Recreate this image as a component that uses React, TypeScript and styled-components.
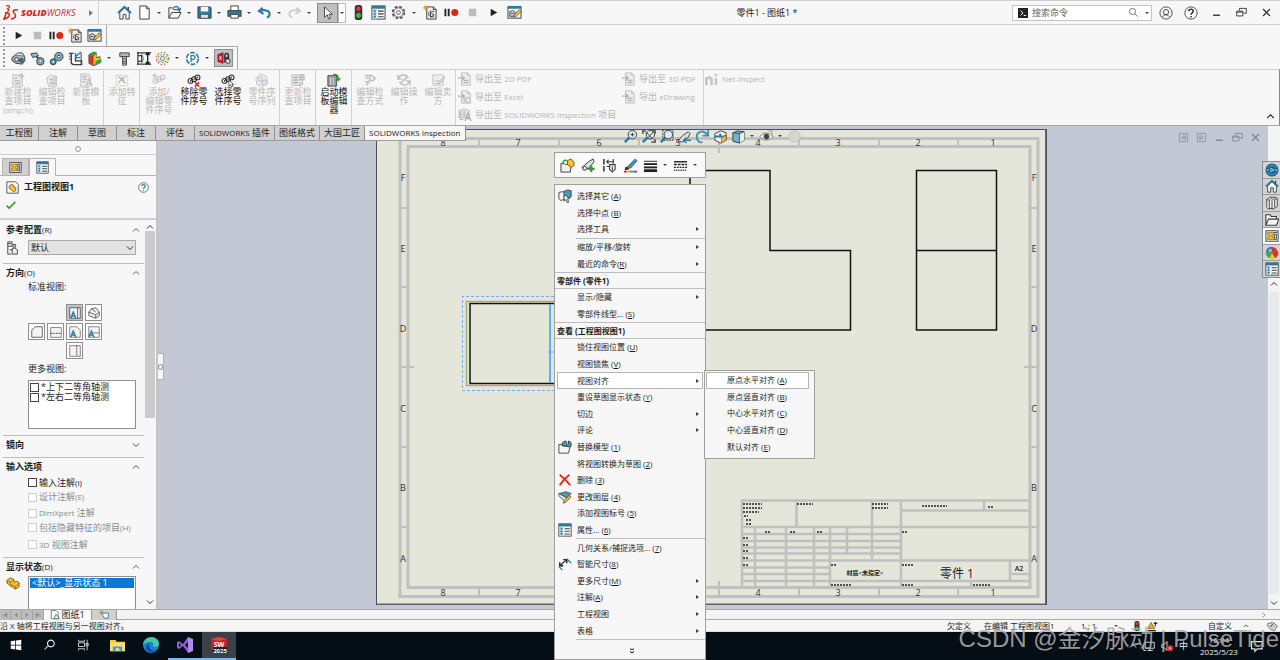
import React from 'react';
import styled, { createGlobalStyle, css } from 'styled-components';

const ink = '#3c3c3c';
const blue = '#2c7ba0';
const face = '#f7f7f7';
const line = '#bdbdbd';

const Global = createGlobalStyle`
  * { box-sizing: border-box; }
  html, body { margin: 0; padding: 0; }
  body {
    font-family: "Open Sans", "Noto Sans CJK SC", sans-serif;
    font-size: 9px;
    line-height: 10px;
    color: #1c1c1c;
    background: ${face};
    overflow: hidden;
  }
  button, input, select { font: inherit; color: inherit; margin: 0; }
  button { border: 0; background: none; padding: 0; }
  ul { list-style: none; margin: 0; padding: 0; }
  h1, h2 { margin: 0; font-size: 9px; line-height: 10px; font-weight: 600; }
`;

/* ---------- icons ---------- */

const list = (
  <>
    <rect x="1" y="1" width="14" height="14" fill="#fff" stroke={ink} />
    <rect x="1" y="1" width="14" height="3" fill={blue} />
    <rect x="2" y="4" width="4" height="11" fill="#b9d8e6" />
    <path d="M3 6.500h2M3 9.500h2M3 12.500h2" stroke={blue} strokeWidth="2" />
    <path d="M7.500 6.500h6M7.500 9.500h6M7.500 12.500h6" stroke={ink} strokeWidth="1.200" />
  </>
);
const macro = (
  <>
    <path d="M4 2h7l3 3v10H4z" fill="#eee" stroke={ink} />
    <path d="M11 2v3h3" fill="none" stroke={ink} />
    <path d="M12 7.500c-4-2-6 0-6 2s2 4 6 3M8 8l4 2.500-4 2.500z" fill="#fff" stroke={ink} />
    <path d="M3 0v6M0 3h6M1 1l4 4M5 1L1 5" stroke="#e0892a" />
  </>
);
const edit = (
  <>
    <rect x="1" y="2" width="14" height="12" fill="#f4f4f4" stroke={ink} />
    <rect x="1" y="1" width="14" height="3" fill={blue} />
    <path d="M3 12V7l3-1 3 2-2 4zM4 9h3" fill="#ddd" stroke={ink} />
    <path d="M7 13l1-3 5-5 2 2-5 5z" fill="#f2c230" stroke={ink} strokeWidth=".7" />
  </>
);
const drawingTree = (
  <>
    <rect x="1" y="2" width="14" height="12" fill="#e4e4e4" stroke={ink} />
    <path d="M3 4h7v3H8v2h2v3H3V9h2V7H3z" fill="#f0b92a" stroke="#6b5310" strokeWidth=".6" />
    <path d="M11 6h2v6h-2zM10 4h4" stroke={ink} fill="#fff" />
  </>
);
const part = (
  <>
    <path d="M1 5l4-3 4 2v3l4-1 2 2v4l-4 3-5-3-5-4z" fill="#f2c03a" stroke="#7b5a0c" />
    <path d="M1 5l4 2 4-3M5 7v3l6 2 4-4M11 12v3" fill="none" stroke="#7b5a0c" strokeWidth=".8" />
  </>
);
const doc = <path d="M3 1h7l3 3v11H3zM10 1v3h3" fill="#fdfdfd" stroke={ink} />;
const light = (
  <>
    <rect x="4" y="0" width="8" height="16" rx="3" fill="#333" />
    <circle cx="8" cy="4" r="2.500" fill="#e03a2a" />
    <circle cx="8" cy="11" r="2.800" fill="#3fb04a" />
  </>
);
const exportDoc = (
  <>
    <path d="M4 1h7l3 3v11H4V9M4 5V1M11 1v3h3" fill="#ececec" stroke="#bdbdbd" />
    <path d="M0 7h6M4 4l3 3-3 3" fill="none" stroke="#b0b0b0" strokeWidth="1.600" />
    <path d="M6 12h6M7 9.500h5" stroke="#b6b6b6" strokeWidth="1.500" />
  </>
);
const balloons = (c: string) => (
  <>
    <circle cx="4" cy="9" r="2.800" fill="none" stroke={c} strokeWidth="1.200" />
    <circle cx="8" cy="7" r="2.800" fill="none" stroke={c} strokeWidth="1.200" />
    <circle cx="12" cy="5" r="2.800" fill="none" stroke={c} strokeWidth="1.200" />
    <path d="M4 8v2M8 6v2M12 4v2" stroke={c} />
  </>
);
const lens = (
  <>
    <circle cx="10" cy="6" r="4.500" fill="#dce9ee" stroke={ink} />
    <path d="M7 9l-5 5" stroke={blue} strokeWidth="2.600" />
  </>
);

const icons: Record<string, React.ReactNode> = {
  home: (
    <>
      <path d="M3 8v7h3.500v-5h3v5H13V8L8 3z" fill="#fafafa" stroke={ink} />
      <path d="M1 8.500L8 2l7 6.500" fill="none" stroke={blue} strokeWidth="2" />
      <path d="M12 2v3" stroke={ink} strokeWidth="1.500" />
    </>
  ),
  doc,
  open: (
    <>
      <path d="M2 14V3h4l1 2h6v3M2 14l3-6h10l-3 6z" fill="#f5f5f5" stroke={ink} />
      <path d="M7 3c3-3 5-1 6 2M10.500 4.500L13.500 6l1-3" fill="none" stroke={blue} strokeWidth="1.500" />
    </>
  ),
  save: (
    <>
      <path d="M1 2h13l1 1v11H1z" fill={blue} stroke={ink} />
      <rect x="4" y="2" width="8" height="5" fill="#f5f5f5" />
      <rect x="4" y="10" width="8" height="4" fill="#ddd" stroke={ink} strokeWidth=".6" />
    </>
  ),
  print: (
    <>
      <path d="M4 6V1h8v5" fill="#fff" stroke={ink} />
      <rect x="1" y="6" width="14" height="6" fill={blue} stroke={ink} />
      <path d="M4 10h8v4H4z" fill="#fff" stroke={ink} />
    </>
  ),
  undo: <path d="M6 3L2 6.500l5 3M2.500 6.500c5-2 11-1 11 3 0 2-1 3-3 4" fill="none" stroke={blue} strokeWidth="2.200" />,
  redo: <path d="M10 3l4 3.500-5 3M13.500 6.500c-5-2-11-1-11 3 0 2 1 3 3 4" fill="none" stroke="#cfcfcf" strokeWidth="2" />,
  cursor: <path d="M4 1v12l3-3 2 5 2-1-2-4.500h4z" fill="#fff" stroke={ink} />,
  light,
  list,
  gear: (
    <>
      <circle cx="8" cy="8" r="6.300" fill="none" stroke="#555" strokeWidth="1.800" strokeDasharray="3 1.950" />
      <circle cx="8" cy="8" r="5" fill="#f6f6f6" stroke="#555" />
      <circle cx="8" cy="8" r="2" fill="none" stroke="#555" />
    </>
  ),
  macro,
  rec: (
    <>
      <path d="M1.500 4v8M5 4v8" stroke="#222" strokeWidth="2" />
      <circle cx="11.500" cy="8" r="3.800" fill="#e02510" />
    </>
  ),
  stop: <rect x="4" y="4" width="8" height="8" fill="#bcbcbc" />,
  play: <path d="M5 4l7 4-7 4z" fill="#222" />,
  edit,
  machine: (
    <>
      <path d="M1 7l4-3 9 1 1 5-3 4-7-1-4-3z" fill="#9fb2ba" stroke={ink} />
      <circle cx="6" cy="9" r="2" fill="#e8eef0" stroke={ink} />
      <circle cx="11" cy="10" r="2" fill={blue} stroke={ink} />
      <path d="M5 4l2-2h5l2 3" fill="#dfe6e9" stroke={ink} />
    </>
  ),
  links: (
    <>
      <path d="M1 3l6-1 2 3-6 2z" fill="#8fc0d6" stroke={ink} />
      <path d="M7 6l4 3" stroke={ink} strokeWidth="2" />
      <circle cx="11" cy="11" r="4" fill="#7ab3cc" stroke={ink} />
      <circle cx="11" cy="11" r="1.500" fill="#fff" stroke={ink} strokeWidth=".6" />
    </>
  ),
  gears: (
    <>
      <circle cx="10.500" cy="6" r="4.500" fill="#7ab3cc" stroke={ink} />
      <circle cx="10.500" cy="6" r="1.600" fill="#fff" stroke={ink} />
      <circle cx="4.500" cy="11.500" r="3.200" fill="#4f93b2" stroke={ink} />
      <circle cx="4.500" cy="11.500" r="1" fill="#fff" />
    </>
  ),
  pipe: (
    <>
      <path d="M1 2.500h5M3.500 3v9c0 2 1 2.500 3 2.500h8v-4H8V7" fill="none" stroke={ink} strokeWidth="1.400" />
      <path d="M1 5.500h2M1 8.500h2M14 2v12" stroke={ink} />
      <path d="M14 1L8 6M8 2v5h5" fill="none" stroke={blue} strokeWidth="1.400" />
    </>
  ),
  cube: (
    <>
      <path d="M2 4l5-3 3 1v5l4-1 1 6-8 4-5-3z" fill="#2fa84a" stroke={ink} strokeWidth=".7" />
      <path d="M2 4l5 2v10l-5-3z" fill="#d8322a" />
      <path d="M7 6l3-3v5l5-1v4l-8 4z" fill="#f0c52c" />
      <path d="M9 11l6-3v4l-6 3z" fill="#2fa84a" />
    </>
  ),
  screw: (
    <>
      <path d="M3 2h10v4H3z" fill="#b9b9b9" stroke={ink} />
      <path d="M6 6h4v9H6z" fill="#ddd" stroke={ink} />
      <path d="M6 8.500h4M6 11h4M6 13h4" stroke={ink} />
    </>
  ),
  dim: (
    <>
      <path d="M2 1v14M1 2h8M1 14h8M2 5h4v6H2" fill="none" stroke={ink} strokeWidth="1.300" />
      <path d="M6 3l2 5-2 5" fill="none" stroke={blue} />
      <path d="M12.500 2v12M10.500 4.500L12.500 2l2 2.500M10.500 11.500l2 2.500 2-2.500M9 2h7M9 14h7" fill="none" stroke="#111" strokeWidth="1.300" />
    </>
  ),
  dots: (
    <>
      <circle cx="8" cy="8" r="6.500" fill="none" stroke="#e05a4a" strokeWidth="1.500" strokeDasharray="1.500 2" />
      <ellipse cx="8" cy="8" rx="4.800" ry="4" fill="none" stroke="#5fb843" strokeWidth="1.500" strokeDasharray="1.500 1.500" />
      <path d="M1 5h3M1 11h3M12 5h3M12 11h3" stroke="#e6c52e" />
      <circle cx="8" cy="8" r="2.200" fill="#eee" stroke="#777" />
    </>
  ),
  ring: (
    <>
      <circle cx="8" cy="8" r="6.300" fill="none" stroke={blue} strokeWidth="1.800" strokeDasharray="5 1.600" />
      <path d="M6.500 12V5h2.300a1.800 1.800 0 010 4H6.500" fill="none" stroke={blue} strokeWidth="1.300" />
    </>
  ),
  inspect: (
    <>
      <path d="M1 4l6-2v12l-6-2z" fill="#c8202a" stroke="#6b1015" strokeWidth=".7" />
      <path d="M3 6l2 4M5 6l-2 4" stroke="#fff" />
      <path d="M9 13V5c0-3 4-3 4 0v8M9 8h4" fill="none" stroke="#222" strokeWidth="1.500" />
      <circle cx="12.500" cy="11.500" r="2.500" fill="#eee" stroke="#222" />
    </>
  ),
  formNew: (
    <>
      <path d="M2 2h11v13H2z" fill="#ededed" stroke="#bdbdbd" />
      <path d="M4 6h3M4 9h7M4 12h7" stroke="#b5b5b5" strokeWidth="1.600" />
      <path d="M12 0v7M8.500 3.500h7" stroke="#c2c2c2" strokeWidth="1.500" />
    </>
  ),
  formEdit: (
    <>
      <path d="M2 5l5-3 6 3v10H4z" fill="#ededed" stroke="#bdbdbd" />
      <path d="M6 13l1-4 5-6 2 2-5 7z" fill="#ddd" stroke="#b5b5b5" />
      <path d="M5 7h3M9 12h4" stroke="#b5b5b5" strokeWidth="1.500" />
    </>
  ),
  formSheet: (
    <>
      <path d="M2 1h9l2 3v11H2z" fill="#ededed" stroke="#bdbdbd" />
      <path d="M4 4h5M4 7h5M4 10h3" stroke="#b5b5b5" strokeWidth="1.500" />
      <path d="M8 15l3-8 4 8M9 12h5" fill="none" stroke="#bdbdbd" strokeWidth="1.400" />
    </>
  ),
  feature: (
    <>
      <rect x="1.500" y="2.500" width="13" height="12" fill="none" stroke="#b9b9b9" strokeDasharray="2 1.500" />
      <path d="M4 12l4-7 4 7M4 4l8 8M12 4l-3 3" fill="none" stroke="#b9b9b9" strokeWidth="1.400" />
    </>
  ),
  balloonAdd: (
    <>
      {balloons('#c4c4c4')}
      <path d="M3 0v6M0 3h6" stroke="#c4c4c4" strokeWidth="1.400" />
    </>
  ),
  balloonDel: (
    <>
      {balloons('#2a2a2a')}
      <path d="M9 10.500l5 5M14 10.500l-5 5" stroke="#e02510" strokeWidth="1.800" />
    </>
  ),
  balloonPick: (
    <>
      {balloons('#2a2a2a')}
      <path d="M9 8v7l2-1.500 1 2.500 1.500-.6-1-2.400h2z" fill="#fff" stroke="#2a2a2a" strokeWidth=".8" />
    </>
  ),
  sequence: (
    <>
      <path d="M1 6l5-5 7 3 1 7-5 4-7-2z" fill="#ececec" stroke="#c0c0c0" />
      <circle cx="6" cy="7" r="2.500" fill="none" stroke="#b5b5b5" />
      <circle cx="11" cy="11" r="3" fill="#e4e4e4" stroke="#b5b5b5" />
    </>
  ),
  update: (
    <>
      <path d="M1 2h9v12H1z" fill="#e6e6e6" stroke="#bdbdbd" />
      <path d="M3 5h5M3 8h5M3 11h5" stroke="#aaa" strokeWidth="1.500" />
      <path d="M11 2h4v6h-4zM13 9v4l-4 2" fill="#ccc" stroke="#b0b0b0" />
    </>
  ),
  template: (
    <>
      <path d="M1 3h10v12H1z" fill="#9a9a9a" stroke="#444" />
      <path d="M4 5v9M7 5v9" stroke="#ddd" strokeWidth="1.200" />
      <path d="M7 2c4-1 6 1 6 5" fill="none" stroke="#2f9a3a" strokeWidth="1.800" />
      <path d="M10 6h6l-3 4z" fill="#2f9a3a" />
    </>
  ),
  method: <path d="M2 3h8l4 3-3 3-3-1-4 6M3 6h6M2 10h4" fill="none" stroke="#c0c0c0" strokeWidth="1.800" />,
  operation: <path d="M13 6c-2-5-9-5-11 0M1 2v5h5M3 10c2 5 9 5 11 0M15 14V9h-5M5 11l6-6" fill="none" stroke="#c0c0c0" strokeWidth="1.700" />,
  vendor: (
    <>
      <path d="M2 2h12v12H2zM4 9h6M4 12h6" fill="#ededed" stroke="#c2c2c2" />
      <path d="M8 13l1-3 6-6 1 2-6 6z" fill="#ddd" stroke="#b9b9b9" />
    </>
  ),
  exportDoc,
  exportExcel: (
    <>
      {exportDoc}
      <path d="M8 8h7v7H8z" fill="#c9c9c9" />
      <path d="M9.500 9.500l4 4M13.500 9.500l-4 4" stroke="#fff" />
    </>
  ),
  exportProject: (
    <>
      <path d="M1 3l6-2 6 2v8H1z" fill="#e6e6e6" stroke="#b9b9b9" />
      <path d="M3 4v6M7 3v7M8 15l3-9 4 9M9 12h5M2 13h4" fill="none" stroke="#b3b3b3" strokeWidth="1.500" />
    </>
  ),
  ni: <path d="M1.500 15V6M1.500 9c1-3.500 6-3.500 6 0v6M12.500 15V7M12.500 2v3" fill="none" stroke="#c6c6c6" strokeWidth="3" />,
  zoomFit: (
    <>
      {lens}
      <path d="M8 6h4M10 4v4" stroke={ink} />
    </>
  ),
  zoomArea: (
    <>
      <path d="M2 5V2h3M11 2h4v3M15 11v3h-4" fill="none" stroke={ink} strokeWidth="1.500" />
      {lens}
      <path d="M5 3l8 8M13 3l-6 7" stroke={ink} />
    </>
  ),
  zoomPrev: (
    <>
      <rect x="4" y="1" width="11" height="11" fill="none" stroke={ink} strokeDasharray="2 1" />
      {lens}
    </>
  ),
  section: (
    <>
      <path d="M1 13l5-6 6-4 2 2-3 5-5 4z" fill="#dce3e6" stroke={ink} />
      <path d="M15 12H8M10 9l-3 3 3 3" fill="none" stroke={blue} strokeWidth="1.500" />
    </>
  ),
  rotate: <path d="M14 1v6H8M13 6C9 0 1 3 2 9c0 4 3 6 6 5" fill="none" stroke="#4292b4" strokeWidth="2" />,
  view3d: (
    <>
      <path d="M2 5l6-3 6 2v8l-6 3-6-3z" fill="#f2f2f2" stroke={ink} />
      <path d="M2 8h7l-2-3M14 7c-3 0-5 2-4 5" fill="none" stroke={blue} strokeWidth="2" />
      <path d="M9 9l5-2v5l-5 3z" fill="#eab54a" stroke="#7a5a1a" strokeWidth=".6" />
    </>
  ),
  shaded: (
    <>
      <path d="M2 4l5-2 7 1v9l-5 3-7-2z" fill="#6fb3d0" stroke={ink} />
      <path d="M9 5l5-2v9l-5 3z" fill="#e9eff1" />
      <path d="M2 4l7 1v10M9 5l5-2" fill="none" stroke={ink} strokeWidth=".8" />
    </>
  ),
  eye: (
    <>
      <path d="M1 8c4-5 10-5 14 0-4 5-10 5-14 0z" fill="#eee" stroke="#777" />
      <circle cx="8" cy="8" r="3" fill="#444" />
      <path d="M10 2h4v4" fill="none" stroke="#999" />
    </>
  ),
  ball: <circle cx="8" cy="8" r="6" fill="#d6d8d0" stroke="#c0c2ba" />,
  pageLeft: <path d="M2 2h12v12H2zM5 8l4-3v6zM11 5v6" fill="none" stroke="#8d919b" strokeWidth="1.300" />,
  pageRight: <path d="M2 2h12v12H2zM11 8L7 5v6zM5 5v6" fill="none" stroke="#8d919b" strokeWidth="1.300" />,
  min: <path d="M3 12h10" stroke="currentColor" strokeWidth="2" />,
  restore: <path d="M5 5V2h10v7h-4M1 6h9v7H1zM1 7.500h9" fill="none" stroke="currentColor" strokeWidth="1.300" />,
  close: <path d="M3 3l10 10M13 3L3 13" stroke="currentColor" strokeWidth="1.800" />,
  user: (
    <>
      <circle cx="8" cy="8" r="7" fill="none" stroke={ink} />
      <circle cx="8" cy="7" r="3" fill="none" stroke={ink} />
      <path d="M4 13c1-4 7-4 8 0" fill="none" stroke={ink} />
    </>
  ),
  help: (
    <>
      <circle cx="8" cy="8" r="7" fill="#fff" stroke={ink} />
      <path d="M5.500 6c0-3 5-3 5 0 0 2-2.500 1.800-2.500 4M8 11.500v1.500" fill="none" stroke="currentColor" strokeWidth="1.800" />
    </>
  ),
  prompt: (
    <>
      <rect x="0" y="0" width="16" height="16" fill="#222" />
      <path d="M4 4l4 4-4 4M9 12h4" fill="none" stroke="#fff" strokeWidth="1.500" />
    </>
  ),
  search: <path d="M14 14l-4-4M11 6.500a4.500 4.500 0 11-9 0 4.500 4.500 0 019 0z" fill="none" stroke="currentColor" strokeWidth="1.300" />,
  chevUp: <path d="M2 11l6-6 6 6" fill="none" stroke="currentColor" strokeWidth="1.800" />,
  chevDown: <path d="M2 5l6 6 6-6" fill="none" stroke="currentColor" strokeWidth="1.800" />,
  chevRight: <path d="M5 3l5 5-5 5" fill="none" stroke="currentColor" strokeWidth="2" />,
  sphere: (
    <>
      <circle cx="8" cy="8" r="7.500" fill="#1f668e" />
      <path d="M3 5c3-3 7-3 10 0M3 11c3 3 7 3 10 0" fill="none" stroke="#4b9cc0" strokeWidth="1.200" />
      <path d="M6.500 6l4 2-4 2z" fill="none" stroke="#9fd0e6" />
      <path d="M2 8h2M12 8h2" stroke="#7cc0de" strokeWidth="2" />
    </>
  ),
  library: <path d="M2 4l4-3 2 1 3-1 3 2v9l-5 3-2-1-3 1-2-2zM2 4l3 1v10M5 5l3-3M8 5v10M8 5l3-3M11 4v9M11 4l3-1" fill="#eee" stroke={ink} />,
  folder: <path d="M1 14V2h5l1 2h6v3M1 14L4 7h12l-3 7z" fill="#f4f4f4" stroke={ink} strokeWidth="1.200" />,
  drawingTree,
  colors: (
    <>
      <circle cx="8" cy="8" r="7" fill="#f0c22c" />
      <path d="M8 8V1a7 7 0 016 4z" fill="#d9302a" />
      <path d="M8 8l6-3a7 7 0 01-2 9z" fill="#c53a2c" />
      <path d="M8 8V1a7 7 0 00-7 6z" fill="#2f78c4" />
      <path d="M8 8L1 7a7 7 0 004 7z" fill="#3fa648" />
      <circle cx="6" cy="5" r="2" fill="#fff" opacity=".5" />
    </>
  ),
  partDoc: (
    <>
      <path d="M1 1h11l3 3v11H1z" fill="#fafafa" stroke={ink} />
      <path d="M4 6l3-2 2 1v2l3 1v4l-3 1-5-4z" fill="#f2c03a" stroke="#7b5a0c" />
    </>
  ),
  part,
  check: <path d="M1 9l4 4L15 3" fill="none" stroke="#2aa01c" strokeWidth="2.400" />,
  config: <path d="M2 1h5v5H2zM2 6v9h4M4 10h4M8 4h3v3H8zM7 9l3-1 3 2v5H7zM2 3h4" fill="#eee" stroke={ink} />,
  vFront: (
    <>
      <path d="M2 2h9v12H2zM11 2h3v12h-3" fill="#f5f5f5" stroke="#555" />
      <path d="M3 14l3-7 3 7M4 11.500h4" fill="none" stroke={blue} strokeWidth="1.600" />
    </>
  ),
  vIso: <path d="M2 7l3-4 5-1 4 5v4l-4 3-8-3zM2 7l8 3 4-3M10 10v4M5 3l5 4" fill="#eee" stroke="#555" />,
  vLeft: <path d="M2 6l4-4h8v12H2z" fill="#f5f5f5" stroke="#555" />,
  vTop: (
    <>
      <rect x="2" y="3" width="12" height="11" fill="#f5f5f5" stroke="#777" />
      <path d="M2 9.500h12" stroke="#333" strokeDasharray="2 1" />
    </>
  ),
  vRight: (
    <>
      <path d="M2 2h8l4 4v8H2z" fill="#f5f5f5" stroke="#777" />
      <path d="M3 14l3-7 3 7M4 11.500h4" fill="none" stroke={blue} strokeWidth="1.600" />
    </>
  ),
  vBack: (
    <>
      <path d="M2 2h12v12H2zM7 9h7" fill="#f5f5f5" stroke="#777" />
      <path d="M2 14l3-7 3 7M3 11.500h4" fill="none" stroke={blue} strokeWidth="1.600" />
    </>
  ),
  vBottom: (
    <>
      <rect x="2" y="2" width="12" height="12" fill="#f5f5f5" stroke="#777" />
      <path d="M10 2v12" stroke="#333" strokeDasharray="2 1" />
    </>
  ),
  sheet: (
    <>
      <path d="M2 1h8l3 3v10H2z" fill="#fff" stroke={ink} />
      <path d="M6 14l4-7 5 7z" fill="#fff" stroke={blue} strokeWidth="1.500" />
    </>
  ),
  sheetAdd: (
    <>
      <path d="M4 5h11v8H8z" fill="#f8f8f8" stroke={blue} strokeWidth="1.400" />
      <path d="M4 0v8M0 4h8M1 1l6 6M7 1L1 7" stroke="#e0892a" strokeWidth="1.300" />
    </>
  ),
  first: <path d="M4 3v10M12 3L6 8l6 5z" fill="#8f8f8f" stroke="#8f8f8f" />,
  prev: <path d="M11 3L5 8l6 5z" fill="#8f8f8f" />,
  next: <path d="M5 3l6 5-6 5z" fill="#8f8f8f" />,
  last: <path d="M12 3v10M4 3l6 5-6 5z" fill="#8f8f8f" stroke="#8f8f8f" />,
  openPart: (
    <>
      <path d="M1 15V6h4l1 1h6l-1 8z" fill="#eef3e6" stroke={ink} />
      <path d="M3 6c0-4 3-4 5-3" fill="none" stroke="#2f9a3a" strokeWidth="1.600" />
      <path d="M8 3l3-2 2 1 2 3v3l-3 2-4-3z" fill="#f2c03a" stroke="#7b5a0c" />
    </>
  ),
  hideShow: (
    <>
      <path d="M1 10l7-6 5-3 1 3-6 7-5 2z" fill="#dcdcdc" stroke={ink} />
      <path d="M11 8v7M7.500 11.500h7" stroke="#2f9a3a" strokeWidth="2.400" />
      <circle cx="4" cy="11" r="2" fill="#fff" stroke={ink} />
    </>
  ),
  lockView: (
    <>
      <path d="M2 1v14" stroke="#222" strokeWidth="1.500" strokeDasharray="6 1.500" />
      <path d="M5 4h8M7 2L5 4l2 2M12 1v5M5 9h4M8 7v5l3 3 3-3V7H8M11 9v4" fill="none" stroke={ink} strokeWidth="1.200" />
    </>
  ),
  brush: (
    <>
      <path d="M5 9l8-8 2 2-7 8z" fill="#3f94b8" stroke={ink} strokeWidth=".7" />
      <path d="M2 12c0-3 2-3 4-2l1 2-5 1z" fill="#333" />
      <path d="M1 14.500h3" stroke="#e02510" strokeWidth="2" />
      <path d="M4 14.500h3" stroke="#f2b01e" strokeWidth="2" />
      <path d="M7 14.500h4" stroke="#37b24d" strokeWidth="2" />
      <path d="M11 14.500h4" stroke="#7a3fd0" strokeWidth="2" />
    </>
  ),
  weight: (
    <>
      <path d="M1 3.500h14" stroke="#222" />
      <path d="M1 6.500h14" stroke="#222" strokeWidth="2" />
      <path d="M1 10h14" stroke="#222" strokeWidth="2" />
      <path d="M1 13.500h14" stroke="#222" strokeWidth="3" />
    </>
  ),
  dashes: (
    <>
      <path d="M1 4h14" stroke="#222" strokeWidth="1.500" />
      <path d="M1 7h14" stroke="#222" strokeDasharray="3 1" strokeWidth="1.500" />
      <path d="M1 10h14" stroke="#222" strokeDasharray="2 1" strokeWidth="1.500" />
      <path d="M1 13h14" stroke="#222" strokeDasharray="1 1" strokeWidth="1.500" />
    </>
  ),
  selectOther: (
    <>
      <path d="M6 3l5-2 4 1v7l-4 2-5-2z" fill="#4c9abb" stroke={ink} />
      <path d="M1 4l4-1 2 2v7l-4 1-2-2z" fill="#f5f5f5" stroke={ink} />
      <path d="M7 6v8l2-2 2 4 1-1-1-4h2z" fill="#fff" stroke={ink} />
    </>
  ),
  replace: (
    <>
      <path d="M1 15V5h3l1 2h9l-2 8z" fill="#f5f5f5" stroke={ink} />
      <path d="M5 6V3l3-2 2 1v4l2-1V1l3 2v4l-2 1z" fill="#4c9abb" stroke={ink} />
    </>
  ),
  remove: <path d="M2 2c4 3 8 7 12 12M13 2C9 5 5 9 2 14" fill="none" stroke="#dc2f1c" strokeWidth="2.200" />,
  layer: (
    <>
      <path d="M1 4l8-2 6 2-5 5z" fill="#4c9abb" stroke={ink} strokeWidth=".8" />
      <path d="M1 4v3l7 6 2-4z" fill="#d8e6ec" stroke={ink} strokeWidth=".8" />
      <path d="M6 15l1-3 6-6 2 2-6 6z" fill="#f2c03a" stroke={ink} strokeWidth=".8" />
    </>
  ),
  smartDim: (
    <>
      <path d="M2 10l8-7" fill="none" stroke="#222" strokeWidth="1.500" />
      <path d="M2 6v4h4M6 3h4v4" fill="none" stroke="#222" strokeWidth="1.600" />
      <path d="M1 11l4 4M10 2l5 5" stroke={blue} strokeWidth="1.600" />
    </>
  ),
  dblDown: <path d="M4 3l4 3 4-3M4 9l4 3 4-3" fill="none" stroke="#111" strokeWidth="2" />,
  windows: <path d="M1 3l6-1v5.500H1zM8 2l7-1v6.500H8zM1 8.500h6V14l-6-1zM8 8.500h7V15l-7-1z" fill="#fff" />,
  find: <path d="M2 14l5-5M6 6a4.500 4.500 0 109 0 4.500 4.500 0 10-9 0z" fill="none" stroke="#f0f0f0" strokeWidth="1.400" />,
  taskview: <path d="M2 1v2h8V1M2 5h8v5H2zM2 15v-2h8v2M13.500 1v14M12 6h3v3h-3z" fill="none" stroke="#d8d8d8" strokeWidth="1.200" />,
  explorer: (
    <>
      <path d="M0 2h6l1 2h9v10H0z" fill="#f6c944" />
      <path d="M0 5h16v9H0z" fill="#fbdc7a" />
      <path d="M3 14V9h10v5h-3v-3H6v3z" fill="#3a9fe0" />
    </>
  ),
  edge: (
    <>
      <circle cx="8" cy="8" r="8" fill="#1a7fd0" />
      <path d="M0 8C1-2 16-2 16 7c0 3-5 4-6 2 1-3-1-5-4-4C3 5 1 7 0 8z" fill="#43c8a0" />
      <path d="M6 8c0 5 4 7 8 5-3 4-9 3-11-1 0-3 1-5 3-5z" fill="#0c4f9e" />
    </>
  ),
  vs: (
    <>
      <path d="M0 5l2-1 4 3 5-7v16L6 9l-4 3-2-1zM2 6v4l2-2zM11 5L8 8l3 3z" fill="#8a5bd6" fillRule="evenodd" />
      <path d="M11 0l5 2v12l-5 2z" fill="#b48af0" />
    </>
  ),
  trayPc: <path d="M3 3h12v8H3zM6 14h7M9 11v3M1 6v8h3" fill="none" stroke="#e2e2e2" strokeWidth="1.200" />,
  speaker: (
    <>
      <path d="M1 6h3l4-4v12L4 10H1z" fill="none" stroke="#e2e2e2" strokeWidth="1.200" />
      <circle cx="12" cy="11" r="4" fill="#e03030" />
      <path d="M10.500 9.500l3 3M13.500 9.500l-3 3" stroke="#fff" />
    </>
  ),
  note: <path d="M2 2h13v9H9l-3 3v-3H2z" fill="none" stroke="#e8e8e8" strokeWidth="1.400" />,
  warn: (
    <>
      <path d="M6 2l5 9H1z" fill="#f0a81e" stroke="#7a5208" />
      <path d="M1 14h12M12 8V2M10 4l2-2 3 2" fill="none" stroke="#222" strokeWidth="1.500" />
    </>
  ),
  tag: <path d="M1 4l7-2 7 5-4 7-6-2-4-5zM4 6l5 5M6 4l6 5M4 9l6-6" fill="#eee" stroke={ink} />,
};

const Svg = styled.svg<{ $size: number }>`
  display: block;
  flex: none;
  width: ${(p) => p.$size}px;
  height: ${(p) => p.$size}px;
`;
const Icon = ({ name, size = 14 }: { name: string; size?: number }) => (
  <Svg $size={size} viewBox="0 0 16 16" aria-hidden="true">{icons[name]}</Svg>
);

/* ---------- shared controls ---------- */

const ToolButton = styled.button<{ $pressed?: boolean; $w?: number }>`
  width: ${(p) => p.$w ?? 16}px;
  height: 18px;
  flex: none;
  display: flex;
  align-items: center;
  justify-content: center;
  ${(p) => p.$pressed && css`background: #bfbfbf; border: 1px solid #8c8c8c;`}
`;
const CaretButton = styled.button<{ $boxed?: boolean }>`
  width: 8px;
  height: 18px;
  flex: none;
  display: flex;
  align-items: center;
  justify-content: center;
  ${(p) => p.$boxed && css`border: 1px solid #bdbdbd; background: #fff;`}
  &::after {
    content: "";
    border: 2px solid transparent;
    border-top-color: #444;
    border-bottom: 0;
  }
`;
const Tools = styled.div<{ $gap?: number }>`
  display: flex;
  align-items: center;
  gap: ${(p) => p.$gap ?? 3}px;
`;

type Tool = [icon: string, label: string, caret?: boolean];
const ToolRun = ({ items, gap, size = 15 }: { items: Tool[]; gap?: number; size?: number }) => (
  <Tools $gap={gap}>
    {items.map(([icon, label, caret]) => (
      <React.Fragment key={label}>
        <ToolButton aria-label={label}><Icon name={icon} size={size} /></ToolButton>
        {caret && <CaretButton aria-label={`${label}选项`} />}
      </React.Fragment>
    ))}
  </Tools>
);

/* ---------- page frame ---------- */

const Page = styled.div`
  position: relative;
  display: flex;
  flex-direction: column;
  height: 100vh;
  min-width: 1000px;
`;
const TitleBar = styled.header`
  display: flex;
  align-items: center;
  flex: none;
  height: 25px;
  border-top: 1px solid #cfcfcf;
  border-bottom: 1px solid #cfcfcf;
`;
const Logo = styled.div`
  display: flex;
  align-items: center;
  gap: 2px;
  width: 99px;
  height: 23px;
  padding-left: 3px;
  border-right: 1px solid #d4d4d4;
  color: #d9261c;
  font-style: italic;
  b { font-weight: 800; }
`;
const LogoMark = styled.svg`
  width: 16px;
  height: 16px;
`;
const Expand = styled.button`
  margin-left: 11px;
  border: 3px solid transparent;
  border-left: 4px solid #777;
  border-right: 0;
`;
const Quick = styled.div`
  display: flex;
  align-items: center;
  gap: 4px;
  padding-left: 17px;
`;
const Pressed = styled.div`
  display: flex;
  align-items: center;
  height: 20px;
  button { height: 20px; }
`;
const DocTitle = styled.h1`
  flex: 1;
  text-align: center;
  font-weight: 400;
`;
const Search = styled.label`
  display: flex;
  align-items: center;
  gap: 4px;
  width: 140px;
  height: 16px;
  padding: 0 0 0 5px;
  background: #fff;
  border: 1px solid #c4c4c4;
  color: #666;
  input {
    flex: 1;
    min-width: 0;
    border: 0;
    padding: 0;
    outline: 0;
    background: none;
    &::placeholder { color: #666; opacity: 1; }
  }
`;
const WindowTools = styled.div<{ $gap: number }>`
  display: flex;
  align-items: center;
  gap: ${(p) => p.$gap}px;
  color: #333;
`;
const TitleRight = styled.div`
  display: flex;
  align-items: center;
  gap: 7px;
  padding-right: 7px;
`;
const Strip = styled.div<{ $edge?: boolean }>`
  display: flex;
  align-items: center;
  align-self: flex-start;
  flex: none;
  height: ${(p) => (p.$edge ? 23 : 21)}px;
  padding: 0 4px 0 3px;
  gap: 3px;
  border-right: 1px solid #a9a9a9;
  ${(p) => p.$edge && css`border-top: 1px solid #a9a9a9;`}
`;
const Grip = styled.i`
  width: 2px;
  height: 18px;
  margin-right: 2px;
  border-left: 2px dotted #9a9a9a;
`;

/* ---------- ribbon ---------- */

const Ribbon = styled.section`
  display: flex;
  flex: none;
  height: 57px;
  border-top: 1px solid #cfcfcf;
  border-bottom: 1px solid #a6a6ac;
  border-right: 1px solid #888;
`;
const RibbonGroup = styled.div`
  display: flex;
  align-items: flex-start;
  padding: 3px 0 0 1px;
  border-right: 1px solid #d2d2d2;
`;
const RibbonButton = styled.button<{ $wide?: boolean }>`
  display: flex;
  flex-direction: column;
  align-items: center;
  width: ${(p) => (p.$wide ? 36 : 34)}px;
  padding: 0 3px;
  line-height: 9px;
  color: #111;
  &:disabled { color: #b9b9b9; }
  small { font-size: 8px; line-height: 9px; }
`;
const Exports = styled.div`
  display: grid;
  grid-template-columns: 164px 81px;
  grid-auto-rows: 18px;
  grid-auto-flow: row;
  padding-left: 2px;
  border-right: 1px solid #d2d2d2;
`;
const ExportButton = styled.button`
  display: flex;
  align-items: center;
  gap: 3px;
  height: 18px;
  white-space: nowrap;
  &:disabled { color: #b4b4b4; }
  span { font-size: 8px; }
`;
const NetGroup = styled.div`
  flex: 1;
  padding-left: 1px;
`;
const Collapse = styled.button`
  align-self: flex-end;
  padding: 0 4px 4px;
`;

type RibbonItem = { icon: string; text: React.ReactNode; on?: boolean; wide?: boolean; key: string };
const ribbonGroups: RibbonItem[][] = [
  [
    { key: 'a', icon: 'formNew', text: <>新建检查项目<small>(amp;N)</small></> },
    { key: 'b', icon: 'formEdit', text: '编辑检查项目' },
    { key: 'c', icon: 'formSheet', text: '新建模板' },
  ],
  [{ key: 'd', icon: 'feature', text: '添加特征' }],
  [
    { key: 'e', icon: 'balloonAdd', text: '添加/编辑零件序号', wide: true },
    { key: 'f', icon: 'balloonDel', text: '移除零件序号', on: true },
    { key: 'g', icon: 'balloonPick', text: '选择零件序号', on: true },
    { key: 'h', icon: 'sequence', text: '零件序号序列' },
  ],
  [{ key: 'i', icon: 'update', text: '更新检查项目' }],
  [{ key: 'j', icon: 'template', text: '启动模板编辑器', on: true }],
  [
    { key: 'k', icon: 'method', text: '编辑检查方式' },
    { key: 'l', icon: 'operation', text: '编辑操作' },
    { key: 'm', icon: 'vendor', text: '编辑卖方' },
  ],
];

/* ---------- work area ---------- */

const Work = styled.main`
  flex: 1;
  min-height: 0;
  display: grid;
  grid-template-columns: 158px 1fr 12px;
  grid-template-rows: 15px 1fr;
`;
const TabStrip = styled.nav`
  grid-area: 1 / 1 / 2 / 3;
  justify-self: start;
  z-index: 1;
  display: flex;
  background: #f7f7f7;
`;
const CommandTab = styled.button<{ $active?: boolean }>`
  min-width: 39px;
  padding: 0 4px;
  height: 15px;
  border-right: 1px solid #8f8f8f;
  border-bottom: 1px solid #9b9b9b;
  background: ${(p) => (p.$active ? '#f7f7f7' : '#d0d0d0')};
  white-space: nowrap;
  span { font-size: 8px; }
`;
const Viewport = styled.section`
  grid-area: 1 / 2 / 3 / 3;
  position: relative;
  display: flex;
  justify-content: center;
  align-items: flex-start;
  padding: 3px 3px 0 0;
  overflow: hidden;
  background: #c4c8d4;
`;
const HeadsUp = styled.div`
  position: absolute;
  top: 1px;
  left: 464px;
`;
const ChildWindow = styled.div`
  position: absolute;
  top: 2px;
  right: 6px;
  display: flex;
  gap: 4px;
  color: #80848e;
`;
const Splitter = styled.button`
  position: absolute;
  left: 0;
  top: 227px;
  width: 6px;
  height: 27px;
  display: flex;
  align-items: center;
  justify-content: center;
  background: #f7f7f7;
  border: 1px solid #b0b0b0;
  border-left: 0;
  &::after { content: ""; width: 4px; height: 4px; border: 1px solid #999; border-radius: 50%; }
`;
const RightRail = styled.aside`
  grid-area: 1 / 3 / 3 / 4;
  position: relative;
  display: flex;
  flex-direction: column;
  justify-content: flex-end;
  align-items: center;
  padding-bottom: 2px;
  background: #f4f4f4;
`;
const TaskPane = styled.div`
  position: absolute;
  right: 0;
  top: 35px;
  display: flex;
  flex-direction: column;
  width: 18px;
  height: 117px;
  border: 1px solid #8c8c8c;
  border-right: 0;
`;
const PaneButton = styled.button<{ $active?: boolean }>`
  flex: 1;
  display: flex;
  align-items: center;
  justify-content: center;
  background: ${(p) => (p.$active ? '#fff' : '#d3d3d3')};
  & + & { border-top: 1px solid #9c9c9c; }
`;
const RailThumb = styled.div`
  flex: 1;
  width: 10px;
  margin: 4px 0 5px;
  background: #e9e9e9;
`;
const RailTop = styled.div`
  flex: none;
  height: 154px;
`;

/* ---------- property panel ---------- */

const Panel = styled.aside`
  grid-area: 2 / 1 / 3 / 2;
  display: flex;
  flex-direction: column;
  min-height: 0;
  background: ${face};
  border: solid #c4c4c4;
  border-width: 0 2px 0 0;
`;
const PanelGrip = styled.div`
  display: flex;
  justify-content: center;
  align-items: center;
  height: 14px;
  flex: none;
  padding-top: 2px;
  border-bottom: 1px solid #ccc;
  &::after { content: ""; width: 4px; height: 4px; border: 1px solid #999; border-radius: 50%; }
`;
const PanelTabs = styled.div`
  display: flex;
  flex: none;
  height: 21px;
  padding: 3px 0 0 2px;
  border-bottom: 1px solid #b4b4b4;
`;
const PanelTab = styled.button<{ $active?: boolean }>`
  display: flex;
  justify-content: center;
  align-items: center;
  width: 27px;
  height: ${(p) => (p.$active ? 18 : 17)}px;
  border: 1px solid #b4b4b4;
  border-bottom: 0;
  background: ${(p) => (p.$active ? face : '#d0d0d0')};
`;
const PanelHead = styled.div`
  flex: none;
  display: grid;
  grid-template-columns: 14px 1fr 12px;
  column-gap: 4px;
  row-gap: 3px;
  align-items: center;
  height: 44px;
  padding: 3px 6px 6px;
  border-bottom: 2px solid #cfcfcf;
  h2 { font-weight: 700; }
  button { color: ${blue}; }
`;
const PanelBody = styled.div`
  flex: 1;
  min-height: 0;
  display: flex;
`;
const Groups = styled.div`
  flex: 1;
  padding: 1px 0 0 3px;
  overflow: hidden;
`;
const Group = styled.section<{ $h: number }>`
  height: ${(p) => p.$h}px;
  border-bottom: 1px solid #bcbcbc;
  padding-left: 3px;
  &:last-child { border: 0; }
`;
const GroupHead = styled.button`
  display: flex;
  width: 100%;
  height: 18px;
  align-items: center;
  font-weight: 600;
  small { font-size: 8px; font-weight: 400; }
  svg { margin-left: auto; margin-right: 4px; color: #444; }
`;
const Scroller = styled.div`
  width: 12px;
  display: flex;
  flex-direction: column;
  align-items: center;
  padding: 3px 0;
  &::before { content: ""; order: 1; width: 10px; height: 187px; background: #cbcbcb; }
  svg:last-child { order: 2; margin-top: auto; }
`;
const ConfigRow = styled.div`
  display: grid;
  grid-template-columns: 16px 108px;
  column-gap: 6px;
  align-items: center;
  padding-top: 1px;
`;
const SelectBox = styled.span`
  position: relative;
  display: block;
  select {
    display: block;
    appearance: none;
    width: 108px;
    height: 15px;
    padding: 0 2px;
    border: 1px solid #a9a9a9;
    border-radius: 0;
    background: #e2e2e2;
  }
  svg { position: absolute; right: 2px; top: 4px; }
`;
const Sub = styled.div`
  padding: 0 0 0 22px;
`;
const ViewGrid = styled.div`
  display: grid;
  grid-template-columns: repeat(4, 17px);
  grid-auto-rows: 17px;
  gap: 2px;
  padding: 12px 0 5px 0;
`;
const ViewButton = styled.button<{ $col: number; $row: number; $active?: boolean }>`
  grid-area: ${(p) => p.$row} / ${(p) => p.$col};
  display: flex;
  justify-content: center;
  align-items: center;
  border: 1px solid #8f8f8f;
  background: ${(p) => (p.$active ? '#c2c2c2' : '#fff')};
`;
const ListBox = styled.div<{ $h: number; $gap?: number }>`
  width: 108px;
  height: ${(p) => p.$h}px;
  margin-top: ${(p) => p.$gap ?? 0}px;
  border: 1px solid #8c8f96;
  background: #fff;
  padding: 1px;
`;
const Tick = styled.label<{ $h: number; $off?: boolean }>`
  display: flex;
  align-items: center;
  gap: 2px;
  height: ${(p) => p.$h}px;
  white-space: nowrap;
  color: ${(p) => (p.$off ? '#8b8b8b' : '#1c1c1c')};
  small { font-size: 8px; }
  input {
    appearance: none;
    flex: none;
    width: 9px;
    height: 9px;
    background: #fff;
    border: 1px solid ${(p) => (p.$off ? '#cfcfcf' : '#444')};
  }
`;
const Selected = styled.button`
  display: block;
  width: 100%;
  height: 10px;
  text-align: left;
  padding-left: 2px;
  white-space: nowrap;
  background: #0a78d4;
  color: #fff;
`;
const StateRow = styled.div`
  display: grid;
  grid-template-columns: 16px 108px;
  column-gap: 6px;
  align-items: start;
`;

/* ---------- bottom bars ---------- */

const SheetBar = styled.div`
  flex: none;
  display: flex;
  align-items: center;
  height: 11px;
  border-top: 1px solid #a9a9a9;
  border-bottom: 1px solid #a9a9a9;
  background: #f3f3f3;
`;
const SheetNav = styled.button`
  display: flex;
  justify-content: center;
  align-items: center;
  width: 11px;
  height: 10px;
  background: #bcbcbc;
  border-right: 1px solid #a2a2a2;
`;
const SheetTab = styled.button<{ $add?: boolean }>`
  display: flex;
  align-items: center;
  justify-content: center;
  gap: 1px;
  width: ${(p) => (p.$add ? 25 : 48)}px;
  height: 10px;
  border-right: 1px solid #999;
  background: ${(p) => (p.$add ? '#d0d0d0' : '#fbfbfb')};
`;
const SheetEnd = styled.div`
  margin-left: auto;
  padding-right: 12px;
  color: #999;
`;
const StatusBar = styled.footer`
  flex: none;
  display: flex;
  align-items: center;
  height: 12px;
  padding-top: 1px;
  font-size: 8px;
  background: #f5f5f5;
  border-bottom: 1px solid #ddd;
`;
const StatusText = styled.span<{ $w?: number }>`
  white-space: nowrap;
  ${(p) => p.$w && css`width: ${p.$w}px;`}
`;
const StatusRight = styled.div`
  display: flex;
  align-items: center;
  margin-left: auto;
  padding-right: 2px;
`;
const StatusCaret = styled.i`
  display: block;
  width: 4px;
  border: 2px solid transparent;
  border-top-color: #555;
  border-bottom: 0;
`;
const TaskBar = styled.nav`
  flex: none;
  display: flex;
  align-items: center;
  height: 28px;
  background: #050d15;
  color: #f0f0f0;
`;
const TaskButton = styled.button<{ $running?: boolean; $active?: boolean }>`
  display: flex;
  justify-content: center;
  align-items: center;
  width: 34px;
  height: 28px;
  border-bottom: 2px solid ${(p) => (p.$running ? '#76b9ed' : 'transparent')};
  background: ${(p) => (p.$active ? '#3b4148' : 'none')};
  &:first-child { width: 32px; }
`;
const Tray = styled.div`
  display: flex;
  align-items: center;
  gap: 6px;
  margin-left: auto;
  padding-right: 17px;
`;
const Clock = styled.time`
  width: 50px;
  text-align: center;
  font-size: 8px;
  line-height: 12px;
`;
const Watermark = styled.p`
  position: absolute;
  right: 1px;
  bottom: 7px;
  margin: 0;
  font: 24px/28px "Liberation Sans", "Noto Sans CJK SC", sans-serif;
  color: rgba(172, 172, 172, 0.88);
  white-space: nowrap;
  pointer-events: none;
`;

/* ---------- floating menus ---------- */

const MiniBar = styled.div`
  position: absolute;
  left: 554px;
  top: 152px;
  width: 152px;
  height: 26px;
  display: flex;
  align-items: center;
  gap: 4px;
  padding-left: 4px;
  background: #fafafa;
  border: 1px solid #9f9f9f;
`;
const Menu = styled.ul`
  position: absolute;
  left: 554px;
  top: 184px;
  width: 152px;
  height: 476px;
  display: flex;
  flex-direction: column;
  padding-top: 3px;
  background: ${face};
  border: 1px solid #9f9f9f;
  font-size: 8px;
`;
const SubMenu = styled(Menu)`
  left: 704px;
  top: 370px;
  width: 111px;
  height: 89px;
  padding: 1px 4px 3px 0;
`;
const MenuRow = styled.li`
  flex: 1;
  min-height: 0;
  display: flex;
`;
const MenuButton = styled.button<{ $active?: boolean; $sub?: boolean }>`
  flex: 1;
  display: grid;
  grid-template-columns: 16px 1fr 6px;
  column-gap: ${(p) => (p.$sub ? 4 : 3)}px;
  align-items: center;
  margin: 0 ${(p) => (p.$sub ? 1 : 2)}px;
  border: 1px solid ${(p) => (p.$active ? '#b5b5b5' : 'transparent')};
  background: ${(p) => (p.$active ? '#fff' : 'none')};
  text-align: left;
  white-space: nowrap;
  u { text-underline-offset: 1px; }
`;
const Arrow = styled.i`
  border: 2px solid transparent;
  border-left: 3px solid #444;
  border-right: 0;
  width: 3px;
`;
const MenuHead = styled.li`
  flex: none;
  height: 17px;
  padding-left: 2px;
  line-height: 15px;
  font-weight: 700;
  border-top: 1px solid ${line};
  border-bottom: 1px solid ${line};
`;
const MenuSep = styled.li`
  flex: none;
  height: 1px;
  margin-left: 21px;
  background: ${line};
`;
const MenuMore = styled.li`
  flex: none;
  height: 19px;
  display: flex;
  align-items: center;
  justify-content: center;
  padding: 4px 0 0 4px;
`;

type Entry =
  | { kind: 'head'; text: string }
  | { kind: 'sep' }
  | { kind: 'item'; text: string; hot?: string; icon?: string; more?: boolean; active?: boolean; tight?: boolean };
const it = (text: string, hot?: string, o: { icon?: string; more?: boolean; active?: boolean; tight?: boolean } = {}): Entry => ({
  kind: 'item', text, hot, ...o,
});
const menu: Entry[] = [
  it('选择其它', 'A', { icon: 'selectOther' }),
  it('选择中点', 'B'),
  it('选择工具', undefined, { more: true }),
  { kind: 'sep' },
  it('缩放/平移/旋转', undefined, { more: true }),
  it('最近的命令', 'R', { more: true, tight: true }),
  { kind: 'head', text: '零部件 (零件1)' },
  it('显示/隐藏', undefined, { more: true }),
  it('零部件线型...', 'S'),
  { kind: 'head', text: '查看 (工程图视图1)' },
  it('锁住视图位置', 'U'),
  it('视图锁焦', 'V'),
  it('视图对齐', undefined, { more: true, active: true }),
  it('重设草图显示状态', 'Y'),
  it('切边', undefined, { more: true }),
  it('评论', undefined, { more: true }),
  it('替换模型', '1', { icon: 'replace' }),
  it('将视图转换为草图', '2'),
  it('删除', '3', { icon: 'remove' }),
  it('更改图层', '4', { icon: 'layer' }),
  it('添加视图标号', '5'),
  it('属性...', '6', { icon: 'list' }),
  { kind: 'sep' },
  it('几何关系/捕捉选项...', '7'),
  it('智能尺寸', '8', { icon: 'smartDim', tight: true }),
  it('更多尺寸', 'M', { more: true, tight: true }),
  it('注解', 'A', { more: true, tight: true }),
  it('工程视图', undefined, { more: true }),
  it('表格', undefined, { more: true }),
  { kind: 'sep' },
];
const subMenu: Entry[] = [
  it('原点水平对齐', 'A', { active: true }),
  it('原点竖直对齐', 'B'),
  it('中心水平对齐', 'C'),
  it('中心竖直对齐', 'D'),
  it('默认对齐', 'E'),
];
const renderEntry = (sub: boolean) => (e: Entry, i: number) => {
  if (e.kind === 'head') return <MenuHead key={i}>{e.text}</MenuHead>;
  if (e.kind === 'sep') return <MenuSep key={i} role="separator" />;
  return (
    <MenuRow key={i}>
      <MenuButton $active={e.active} $sub={sub}>
        {e.icon ? <Icon name={e.icon} size={14} /> : <span />}
        <span>
          {e.text}
          {e.hot && <>{e.tight ? '' : ' '}(<u>{e.hot}</u>)</>}
        </span>
        {e.more && <Arrow />}
      </MenuButton>
    </MenuRow>
  );
};

/* ---------- drawing sheet ---------- */

const SheetSvg = styled.svg`
  flex: none;
  width: 671px;
  height: 476px;
  font-family: "Open Sans", "Noto Sans CJK SC", sans-serif;
`;
const colTicks = [480, 560, 640, 800, 880, 959];
const rowTicks = [208, 287, 447, 527];
const topLabels: [string, number][] = [['8', 444], ['7', 519], ['6', 600], ['5', 679], ['4', 759], ['3', 839], ['2', 919], ['1', 994]];
const bottomLabels: [string, number][] = [['8', 444], ['7', 519], ['4', 759], ['3', 839], ['2', 919], ['1', 994]];
const rowLabels: [string, number][] = [['F', 177], ['E', 248], ['D', 328], ['C', 408], ['B', 487], ['A', 558]];
const captions: [number, number, number][] = [
  [744, 504, 19], [744, 508, 19], [744, 512, 16], [745, 516, 4], [747, 520, 6], [747, 524, 6],
  [798, 504, 16], [873, 504, 16], [873, 508, 16], [923, 506, 25], [989, 507, 5],
  [766, 532, 6], [791, 532, 6], [818, 532, 6],
  [744, 538, 6], [744, 545, 6], [744, 551, 6], [744, 558, 6], [744, 565, 6],
  [903, 532, 6], [832, 565, 5], [903, 565, 11], [832, 585, 20], [903, 585, 12], [974, 585, 17],
];

const DrawingSheet = () => (
  <SheetSvg viewBox="377 129 671 476" role="img" aria-label="图纸1">
    <rect x="377.500" y="129.500" width="670" height="475" fill="#e5e6da" stroke="#4b4e55" />
    <path d="M1046.500 130v474H378" fill="none" stroke="#6a6d70" />
    <g fill="none" stroke="#c0c0c0" strokeWidth="3">
      <rect x="401" y="138.500" width="638" height="458" />
      <rect x="409" y="146.500" width="622" height="441" />
      <path strokeWidth="2" d={colTicks.map((x) => `M${x} 138v8M${x} 588v8`).join('')} />
      <path strokeWidth="2" d={rowTicks.map((y) => `M401 ${y}h8M1031 ${y}h8`).join('')} />
      <path strokeWidth="2" d="M720 138v15M720 581v15M401 367h14M1025 367h14" />
    </g>
    <g fontSize="9" fill="#333" textAnchor="middle">
      {topLabels.map(([t, x]) => <text key={t} x={x} y="146">{t}</text>)}
      {bottomLabels.map(([t, x]) => <text key={t} x={x} y="596">{t}</text>)}
      {rowLabels.map(([t, y]) => (
        <React.Fragment key={t}>
          <text x="404" y={y + 4}>{t}</text>
          <text x="1035" y={y + 4}>{t}</text>
        </React.Fragment>
      ))}
    </g>

    <g fill="none" stroke="#c0c0c0" strokeWidth="2.500">
      <path d="M743 588V500.500H1031M797.500 500v26M873 500v60M902 500v88M902 510.500H1031M985 500v10M743 527H1031" />
      <path d="M756 527v61M787 527v61M815 527v61M831 527v61M848 527v27" />
      <path d="M743 534h159M743 541h159M743 547.500h159M743 553.500h159M743 560.500H1031M743 567.500h88M743 574h88M743 581H1031M1011 561v20M1011 574h20M972 581v7" />
    </g>
    <path d={captions.map(([x, y, w]) => `M${x} ${y}h${w}`).join('')} stroke="#222" strokeWidth="1.500" strokeDasharray="2 1" />
    <g fill="#222" textAnchor="middle">
      <text x="866" y="575" fontSize="6" fontWeight="600">材质&lt;未指定&gt;</text>
      <text x="958" y="578" fontSize="12">零件 1</text>
      <text x="1020" y="571" fontSize="7" fontWeight="600">A2</text>
    </g>

    <g fill="none" stroke="#111" strokeWidth="1.500">
      <path d="M691 170.500H771V250.500H851.500V330H691z" />
      <path d="M917.500 170.500h80V330h-80zM917.500 250.500h80" />
      <path d="M600 303.500H471V383.500H600" />
    </g>
    <path d="M600 301.500H467.500V385.500H600" fill="none" stroke="#b0ad72" strokeWidth="1.500" />
    <path d="M600 296.500H463.500V390.500H600" fill="none" stroke="#6cb2f4" strokeDasharray="3 2" />
    <path d="M551 304v79" stroke="#62adfb" strokeWidth="2" />
    <path d="M549 352h6" stroke="#62adfb" />
  </SheetSvg>
);

/* ---------- app ---------- */

const exportsList: [string, React.ReactNode, string][] = [
  ['exportDoc', <>导出至 <span>2D PDF</span></>, 'p2'],
  ['exportDoc', <>导出至 <span>3D PDF</span></>, 'p3'],
  ['exportExcel', <>导出至 <span>Excel</span></>, 'xl'],
  ['exportDoc', <>导出 <span>eDrawing</span></>, 'ed'],
  ['exportProject', <>导出至 <span>SOLIDWORKS Inspection</span> 项目</>, 'pr'],
];
const commandTabs: [React.ReactNode, string][] = [
  ['工程图', '1'], ['注解', '2'], ['草图', '3'], ['标注', '4'], ['评估', '5'],
  [<><span>SOLIDWORKS</span> 插件</>, '6'], ['图纸格式', '7'], ['大国工匠', '8'],
];
const views: [string, string, number, number][] = [
  ['vFront', '前视', 3, 1], ['vIso', '等轴测', 4, 1], ['vLeft', '左视', 1, 2], ['vTop', '上视', 2, 2],
  ['vRight', '右视', 3, 2], ['vBack', '后视', 4, 2], ['vBottom', '下视', 3, 3],
];
const panes = ['sphere', 'home', 'library', 'folder', 'drawingTree', 'colors', 'list'];

export default function App() {
  return (
    <Page>
      <Global />
      <TitleBar>
        <Logo>
          <LogoMark viewBox="0 0 16 16" aria-hidden="true">
            <path d="M3 1c4-1 5 1 1 3 3 0 2 3-2 4" fill="none" stroke="#d9261c" strokeWidth="1.200" />
            <path d="M2 8c6-1 6 4-1 6l2-5M15 5c-4-1-6 1-4 3s3 5-3 6" fill="none" stroke="#d9261c" strokeWidth="1.600" />
          </LogoMark>
          <span><b>SOLID</b>WORKS</span>
          <Expand aria-label="展开菜单" />
        </Logo>
        <Quick>
          <ToolRun items={[['home', '主页']]} />
          <ToolRun
            items={[
              ['doc', '新建', true], ['open', '打开', true], ['save', '保存', true],
              ['print', '打印', true], ['undo', '撤消', true], ['redo', '重做', true],
            ]}
          />
          <Pressed>
            <ToolButton $pressed $w={21} aria-label="选择"><Icon name="cursor" /></ToolButton>
            <CaretButton $boxed aria-label="选择选项" />
          </Pressed>
          <ToolRun gap={4} items={[['light', '重建'], ['list', '文件属性'], ['gear', '选项', true]]} />
          <ToolRun gap={5} items={[['macro', '新建宏'], ['rec', '录制宏'], ['stop', '停止'], ['play', '运行宏'], ['edit', '编辑宏']]} />
        </Quick>
        <DocTitle>零件1 - 图纸1 *</DocTitle>
        <TitleRight>
          <Search>
            <Icon name="prompt" size={10} />
            <input type="text" placeholder="搜索命令" aria-label="搜索命令" />
            <Icon name="search" size={11} />
            <CaretButton as="span" />
          </Search>
          <WindowTools $gap={11}>
            <ToolButton $w={14} aria-label="登录"><Icon name="user" /></ToolButton>
            <ToolButton $w={14} aria-label="帮助"><Icon name="help" /></ToolButton>
            <ToolButton $w={14} aria-label="最小化"><Icon name="min" size={11} /></ToolButton>
            <ToolButton $w={14} aria-label="还原"><Icon name="restore" size={11} /></ToolButton>
            <ToolButton $w={14} aria-label="关闭"><Icon name="close" size={11} /></ToolButton>
          </WindowTools>
        </TitleRight>
      </TitleBar>

      <Strip>
        <Grip />
        <ToolRun items={[['play', '运行'], ['stop', '停止'], ['rec', '录制'], ['macro', '新建'], ['edit', '编辑']]} />
      </Strip>
      <Strip $edge>
        <Grip />
        <ToolRun
          items={[
            ['machine', '装配体'], ['links', '配合'], ['gears', '齿轮'], ['pipe', '管道'], ['cube', '仿真', true],
            ['screw', '扣件'], ['dim', '公差'], ['dots', '扫描', true], ['ring', '处理', true],
          ]}
        />
        <ToolButton $pressed $w={19} aria-label="Inspection"><Icon name="inspect" /></ToolButton>
      </Strip>

      <Ribbon>
        {ribbonGroups.map((g) => (
          <RibbonGroup key={g[0].key}>
            {g.map((b) => (
              <RibbonButton key={b.key} $wide={b.wide} disabled={!b.on}>
                <Icon name={b.icon} />
                <span>{b.text}</span>
              </RibbonButton>
            ))}
          </RibbonGroup>
        ))}
        <Exports>
          {exportsList.map(([icon, text, key]) => (
            <ExportButton key={key} disabled><Icon name={icon} /><div>{text}</div></ExportButton>
          ))}
        </Exports>
        <NetGroup>
          <ExportButton disabled><Icon name="ni" /><span>Net-Inspect</span></ExportButton>
        </NetGroup>
        <Collapse aria-label="折叠"><Icon name="chevUp" size={9} /></Collapse>
      </Ribbon>

      <Work>
        <TabStrip>
          {commandTabs.map(([t, k]) => <CommandTab key={k}>{t}</CommandTab>)}
          <CommandTab $active><span>SOLIDWORKS Inspection</span></CommandTab>
        </TabStrip>

        <Panel>
          <PanelGrip />
          <PanelTabs>
            <PanelTab aria-label="设计树"><Icon name="drawingTree" size={13} /></PanelTab>
            <PanelTab $active aria-label="属性"><Icon name="list" size={13} /></PanelTab>
          </PanelTabs>
          <PanelHead>
            <Icon name="partDoc" size={13} />
            <h2>工程图视图1</h2>
            <button aria-label="帮助"><Icon name="help" size={11} /></button>
            <button aria-label="确定"><Icon name="check" size={10} /></button>
          </PanelHead>
          <PanelBody>
            <Groups>
              <Group $h={43}>
                <GroupHead>参考配置<small>(R)</small><Icon name="chevUp" size={8} /></GroupHead>
                <ConfigRow>
                  <Icon name="config" size={14} />
                  <SelectBox>
                    <select aria-label="参考配置"><option>默认</option></select>
                    <Icon name="chevDown" size={8} />
                  </SelectBox>
                </ConfigRow>
              </Group>
              <Group $h={172}>
                <GroupHead>方向<small>(O)</small><Icon name="chevUp" size={8} /></GroupHead>
                <Sub>
                  标准视图:
                  <ViewGrid>
                    {views.map(([icon, label, col, row]) => (
                      <ViewButton key={icon} aria-label={label} $col={col} $row={row} $active={icon === 'vFront'}>
                        <Icon name={icon} />
                      </ViewButton>
                    ))}
                  </ViewGrid>
                  更多视图:
                  <ListBox $h={49} $gap={6}>
                    <Tick $h={10}><input type="checkbox" />*上下二等角轴测</Tick>
                    <Tick $h={10}><input type="checkbox" />*左右二等角轴测</Tick>
                  </ListBox>
                </Sub>
              </Group>
              <Group $h={22}>
                <GroupHead>镜向<Icon name="chevDown" size={8} /></GroupHead>
              </Group>
              <Group $h={100}>
                <GroupHead>输入选项<Icon name="chevUp" size={8} /></GroupHead>
                <Sub>
                  <Tick $h={13}><input type="checkbox" /><span>输入注解<small>(I)</small></span></Tick>
                  <Tick $h={16} $off><input type="checkbox" disabled /><span>设计注解<small>(E)</small></span></Tick>
                  <Tick $h={16} $off><input type="checkbox" disabled /><span><small>DimXpert</small> 注解</span></Tick>
                  <Tick $h={13} $off><input type="checkbox" disabled /><span>包括隐藏特征的项目<small>(H)</small></span></Tick>
                  <Tick $h={21} $off><input type="checkbox" disabled /><span><small>3D</small> 视图注解</span></Tick>
                </Sub>
              </Group>
              <Group $h={60}>
                <GroupHead>显示状态<small>(D)</small><Icon name="chevUp" size={8} /></GroupHead>
                <StateRow>
                  <Icon name="part" size={14} />
                  <ListBox $h={42}><Selected>&lt;默认&gt;_显示状态 1</Selected></ListBox>
                </StateRow>
              </Group>
            </Groups>
            <Scroller>
              <Icon name="chevUp" size={8} />
              <Icon name="chevDown" size={8} />
            </Scroller>
          </PanelBody>
        </Panel>

        <Viewport>
          <DrawingSheet />
          <HeadsUp>
            <ToolRun
              gap={2}
              items={[
                ['zoomFit', '整屏显示'], ['zoomArea', '局部放大'], ['zoomPrev', '上一视图'], ['section', '剖面视图'],
                ['rotate', '旋转'], ['view3d', '3D 视图'], ['shaded', '显示样式', true], ['eye', '隐藏项目', true], ['ball', '外观'],
              ]}
            />
          </HeadsUp>
          <ChildWindow>
            <ToolButton $w={14} aria-label="左窗格"><Icon name="pageLeft" size={11} /></ToolButton>
            <ToolButton $w={14} aria-label="右窗格"><Icon name="pageRight" size={11} /></ToolButton>
            <ToolButton $w={14} aria-label="最小化文档"><Icon name="min" size={11} /></ToolButton>
            <ToolButton $w={14} aria-label="还原文档"><Icon name="restore" size={11} /></ToolButton>
            <ToolButton $w={14} aria-label="关闭文档"><Icon name="close" size={11} /></ToolButton>
          </ChildWindow>
          <Splitter aria-label="折叠面板" />
        </Viewport>

        <RightRail>
          <RailTop />
          <Icon name="chevUp" size={8} />
          <RailThumb />
          <Icon name="chevDown" size={8} />
          <TaskPane>
            {panes.map((p) => (
              <PaneButton key={p} $active={p === 'drawingTree'} aria-label={p}><Icon name={p} /></PaneButton>
            ))}
          </TaskPane>
        </RightRail>
      </Work>

      <SheetBar>
        {['first', 'prev', 'next', 'last'].map((n) => (
          <SheetNav key={n} aria-label={n}><Icon name={n} size={8} /></SheetNav>
        ))}
        <SheetTab><Icon name="sheet" size={10} />图纸1</SheetTab>
        <SheetTab $add aria-label="添加图纸"><Icon name="sheetAdd" size={10} /></SheetTab>
        <SheetEnd><Icon name="chevRight" size={8} /></SheetEnd>
      </SheetBar>
      <StatusBar>
        <StatusText>沿 X 轴将工程视图与另一视图对齐。</StatusText>
        <StatusRight>
          <StatusText $w={37}>欠定义</StatusText>
          <StatusText $w={97}>在编辑 工程图视图1</StatusText>
          <StatusText $w={33}>1 : 1</StatusText>
          <StatusText $w={18}><StatusCaret /></StatusText>
          <StatusText $w={15}><Icon name="light" size={10} /></StatusText>
          <StatusText $w={61}><Icon name="warn" size={11} /></StatusText>
          <StatusText $w={35}>自定义</StatusText>
          <StatusText $w={24}><Icon name="chevUp" size={6} /></StatusText>
          <Icon name="tag" size={11} />
        </StatusRight>
      </StatusBar>
      <TaskBar>
        <TaskButton aria-label="开始"><Icon name="windows" size={12} /></TaskButton>
        <TaskButton aria-label="搜索"><Icon name="find" size={12} /></TaskButton>
        <TaskButton aria-label="任务视图"><Icon name="taskview" size={12} /></TaskButton>
        <TaskButton aria-label="文件资源管理器"><Icon name="explorer" size={15} /></TaskButton>
        <TaskButton aria-label="Edge"><Icon name="edge" size={16} /></TaskButton>
        <TaskButton $running aria-label="Visual Studio"><Icon name="vs" size={16} /></TaskButton>
        <TaskButton $running $active aria-label="SOLIDWORKS 2025">
          <Svg $size={18} viewBox="0 0 18 18">
            <path d="M1 3l8-2 8 2v10l-8 3-8-3z" fill="#c4202a" />
            <path d="M1 3l8-2 8 2-8 2z" fill="#e8413a" />
            <text x="9" y="11" fontSize="7" fontWeight="700" fill="#fff" textAnchor="middle">SW</text>
            <rect x="3" y="11" width="14" height="6" fill="#222" />
            <text x="10" y="17" fontSize="6" fontWeight="700" fill="#fff" textAnchor="middle">2025</text>
          </Svg>
        </TaskButton>
        <Tray>
          <Icon name="chevUp" size={8} />
          <Icon name="trayPc" size={12} />
          <Icon name="speaker" size={12} />
          <span>中</span>
          <Clock>16:04<br />2025/5/23</Clock>
          <Icon name="note" size={13} />
        </Tray>
      </TaskBar>

      <MiniBar>
        <ToolRun gap={5} items={[['openPart', '打开零件'], ['hideShow', '显示隐藏'], ['lockView', '锁定'], ['brush', '线色']]} />
        <ToolRun items={[['weight', '线粗', true], ['dashes', '线条样式', true]]} />
      </MiniBar>
      <Menu>
        {menu.map(renderEntry(false))}
        <MenuMore><button aria-label="更多"><Icon name="dblDown" size={8} /></button></MenuMore>
      </Menu>
      <SubMenu>{subMenu.map(renderEntry(true))}</SubMenu>
      <Watermark>CSDN @金汐脉动 | PulseTide</Watermark>
    </Page>
  );
}
